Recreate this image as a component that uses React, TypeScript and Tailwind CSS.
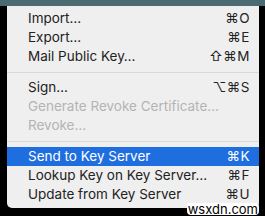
type Item = {
  label: string;
  keys?: string;
  disabled?: boolean;
  active?: boolean;
};

const groups: Item[][] = [
  [
    { label: "Import…", keys: "⌘O" },
    { label: "Export…", keys: "⌘E" },
    { label: "Mail Public Key…", keys: "⇧⌘M" },
  ],
  [
    { label: "Sign…", keys: "⌥⌘S" },
    { label: "Generate Revoke Certificate…", disabled: true },
    { label: "Revoke…", disabled: true },
  ],
  [
    { label: "Send to Key Server", keys: "⌘K", active: true },
    { label: "Lookup Key on Key Server…", keys: "⌘F" },
    { label: "Update from Key Server", keys: "⌘U" },
  ],
];

function MenuRow({ item }: { item: Item }) {
  const color = item.active
    ? "bg-[#1f6ee0] text-white"
    : item.disabled
      ? "text-[#b4b4b4]"
      : "text-[#222222]";
  return (
    <li
      className={`flex h-[19px] items-center justify-between pl-[21px] pr-[9px] ${color}`}
    >
      <span>{item.label}</span>
      {item.keys && (
        <span className="tracking-[0.5px]">{item.keys}</span>
      )}
    </li>
  );
}

export default function App() {
  return (
    <div
      className="relative h-[216px] w-[265px] overflow-hidden bg-black text-[13.5px] leading-none"
      style={{ fontFamily: 'Inter, "DejaVu Sans", sans-serif' }}
    >
      <div className="h-[6px] bg-[#4b6b73]" />
      <div className="ml-[7px] h-[202px] w-[252px] rounded-b-[5px] bg-[#efefef] pt-[3px]">
        {groups.map((group, i) => (
          <div key={i}>
            {i > 0 && (
              <div className="flex h-[12px] items-center">
                <div className="h-px w-full bg-[#d9d9d9]" />
              </div>
            )}
            <ul>
              {group.map((item) => (
                <MenuRow key={item.label} item={item} />
              ))}
            </ul>
          </div>
        ))}
      </div>
      {/* watermark */}
      <span className="absolute bottom-[1px] right-[6px] rounded-sm bg-white px-[1px] text-[13px] leading-[12px] text-black">
        wsxdn.com
      </span>
    </div>
  );
}
